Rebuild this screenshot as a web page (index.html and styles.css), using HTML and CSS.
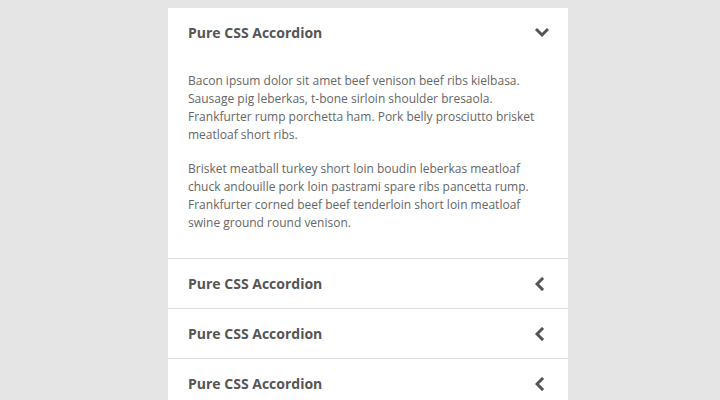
FILE: index.html
```html
<!DOCTYPE html>
<html>
<head>
<meta charset="utf-8">
<link rel="stylesheet" href="styles.css">
</head>
<body>
<div class="accordion">
  <div class="item open">
    <div class="head">
      <span class="title">Pure CSS Accordion</span>
      <svg class="chev" width="14" height="14" viewBox="0 0 14 14"><polyline points="2,4 7,9 12,4" fill="none" stroke="#555" stroke-width="3" stroke-linecap="square"/></svg>
    </div>
    <div class="content">
      <p>Bacon ipsum dolor sit amet beef venison beef ribs kielbasa. Sausage pig leberkas, t-bone sirloin shoulder bresaola. Frankfurter rump porchetta ham. Pork belly prosciutto brisket meatloaf short ribs.</p>
      <p>Brisket meatball turkey short loin boudin leberkas meatloaf chuck andouille pork loin pastrami spare ribs pancetta rump. Frankfurter corned beef beef tenderloin short loin meatloaf swine ground round venison.</p>
    </div>
  </div>
  <div class="item">
    <div class="head">
      <span class="title">Pure CSS Accordion</span>
      <svg class="chev" width="14" height="14" viewBox="0 0 14 14"><polyline points="7,2 2,7 7,12" fill="none" stroke="#555" stroke-width="3" stroke-linecap="square"/></svg>
    </div>
  </div>
  <div class="item">
    <div class="head">
      <span class="title">Pure CSS Accordion</span>
      <svg class="chev" width="14" height="14" viewBox="0 0 14 14"><polyline points="7,2 2,7 7,12" fill="none" stroke="#555" stroke-width="3" stroke-linecap="square"/></svg>
    </div>
  </div>
  <div class="item">
    <div class="head">
      <span class="title">Pure CSS Accordion</span>
      <svg class="chev" width="14" height="14" viewBox="0 0 14 14"><polyline points="7,2 2,7 7,12" fill="none" stroke="#555" stroke-width="3" stroke-linecap="square"/></svg>
    </div>
  </div>
</div>
</body>
</html>
```
FILE: styles.css
```css
html, body {
  margin: 0;
  background: #e5e5e5;
}
body {
  padding: 8px 0 0 168px;
  font-family: "Open Sans", sans-serif;
}
.accordion {
  width: 400px;
  background: #fff;
}
.item {
  border-bottom: 1px solid #ddd;
}
.head {
  height: 49px;
  display: flex;
  align-items: center;
  justify-content: space-between;
  padding: 0 19px 0 20px;
}
.title {
  font-size: 14px;
  font-weight: 700;
  color: #555;
}
.chev {
  display: block;
}
.content {
  padding: 15px 20px 10px;
}
.content p {
  margin: 0 0 16px;
  font-size: 12px;
  line-height: 18px;
  color: #666;
}
```
